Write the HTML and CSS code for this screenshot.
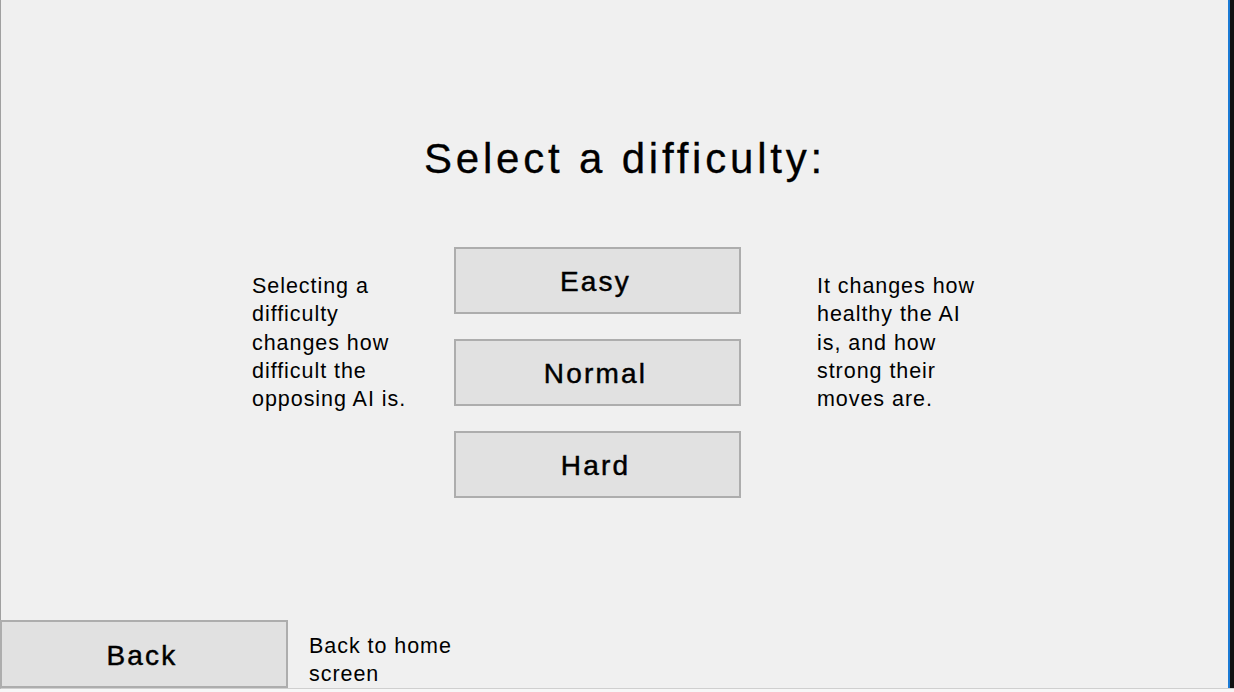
FILE: index.html
```html
<!DOCTYPE html>
<html>
<head>
<meta charset="utf-8">
<link rel="stylesheet" href="styles.css">
<title>Select a difficulty</title>
</head>
<body>
<div class="window">
  <div class="client">
    <h1 class="title">Select a difficulty:</h1>
    <div class="main">
      <p class="note note-left">Selecting a difficulty changes how difficult the opposing AI is.</p>
      <div class="choices">
        <button class="btn btn-choice">Easy</button>
        <button class="btn btn-choice">Normal</button>
        <button class="btn btn-choice">Hard</button>
      </div>
      <p class="note note-right">It changes how healthy the AI is, and how strong their moves are.</p>
    </div>
    <div class="footer">
      <button class="btn btn-back">Back</button>
      <p class="note note-back">Back to home screen</p>
    </div>
  </div>
</div>
</body>
</html>
```

FILE: styles.css
```css
* { box-sizing: border-box; }
html, body { margin: 0; padding: 0; }
body {
  width: 1234px;
  height: 692px;
  overflow: hidden;
  background: #f0f0f0;
  font-family: "Liberation Sans", Arial, sans-serif;
  color: #000;
}
.window {
  width: 1234px;
  height: 692px;
  display: flex;
  flex-direction: column;
  border-bottom: 3px solid #f7f7f7;
}
.client {
  flex: 1;
  display: flex;
  flex-direction: column;
  border-left: 1px solid #a0a0a0;
  border-bottom: 1px solid #cfcfcf;
  padding-right: 6px;
  box-shadow: inset -4px 0 0 #111111, inset -6px 0 0 #1a7ad4;
  background: #f0f0f0;
}
.title {
  margin: 130px 0 0 423px;
  font-weight: normal;
  font-size: 42px;
  letter-spacing: 3.8px;
  line-height: 58px;
  height: 58px;
  -webkit-text-stroke: 0.3px #000;
}
.main {
  display: flex;
  align-items: flex-start;
  padding-left: 251px;
  margin-top: 59px;
}
.note {
  margin: 0;
  font-size: 21.5px;
  letter-spacing: 0.95px;
  line-height: 28.3px;
}
.note-left {
  width: 202px;
  padding-right: 30px;
  margin-top: 25px;
}
.note-right {
  width: 168px;
  margin-left: 76px;
  margin-top: 25px;
}
.choices {
  width: 287px;
  display: flex;
  flex-direction: column;
  gap: 25px;
}
.btn {
  display: block;
  margin: 0;
  padding: 3px 4px 0 0;
  background: #e1e1e1;
  border: 2px solid #adadad;
  font-family: "Liberation Sans", Arial, sans-serif;
  font-size: 28px;
  letter-spacing: 2.2px;
  -webkit-text-stroke: 0.45px #000;
  color: #000;
  text-align: center;
}
.btn-choice {
  width: 287px;
  height: 67px;
}
.footer {
  margin-top: auto;
  height: 68px;
  display: flex;
  align-items: flex-start;
}
.btn-back {
  width: 288px;
  height: 68px;
  margin-left: -1px;
  padding-top: 4px;
  flex-shrink: 0;
}
.note-back {
  width: 160px;
  margin-left: 21px;
  margin-top: 12px;
  flex-shrink: 0;
}
```
